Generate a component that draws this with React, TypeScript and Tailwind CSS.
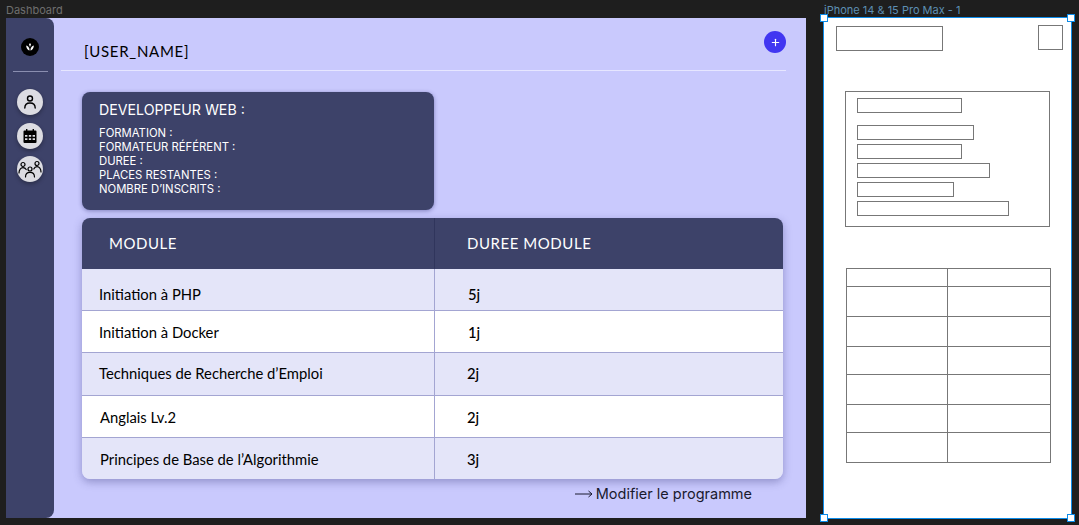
import { Plus } from "lucide-react";

const modules = [
  { name: "Initiation à PHP", days: "5j", nameClass: "pl-[17px]", dayClass: "pl-[33px]", pad: "pt-[9px]", bg: "bg-[#e4e5f9]", h: "h-[42px]" },
  { name: "Initiation à Docker", days: "1j", nameClass: "pl-[17px]", dayClass: "pl-[33px]", pad: "pt-[1px]", bg: "bg-white", h: "h-[42px]" },
  { name: "Techniques de Recherche d’Emploi", days: "2j", nameClass: "pl-[17px]", dayClass: "pl-[32px]", pad: "pb-[2px]", bg: "bg-[#e4e5f9]", h: "h-[43px]" },
  { name: "Anglais Lv.2", days: "2j", nameClass: "pl-[18px]", dayClass: "pl-[32px]", pad: "pt-[2px]", bg: "bg-white", h: "h-[42px]" },
  { name: "Principes de Base de l’Algorithmie", days: "3j", nameClass: "pl-[18px]", dayClass: "pl-[32px]", pad: "pt-[1px]", bg: "bg-[#e4e5f9]", h: "h-[41px]" },
];

const infoLines = ["FORMATION :", "FORMATEUR RÉFÉRENT :", "DUREE :", "PLACES RESTANTES :", "NOMBRE D’INSCRITS :"];

const phoneBars = [
  { w: "w-[105px]", mt: "mt-[6px]" },
  { w: "w-[117px]", mt: "mt-[12px]" },
  { w: "w-[105px]", mt: "mt-1" },
  { w: "w-[133px]", mt: "mt-1" },
  { w: "w-[97px]", mt: "mt-1" },
  { w: "w-[152px]", mt: "mt-1" },
];

const phoneRows = ["h-[18px]", "h-[30px]", "h-[30px]", "h-[28px]", "h-[30px]", "h-[28px]", "h-[30px]"];

function SideButton({ children }: { children: React.ReactNode }) {
  return (
    <div className="flex h-[26px] w-[26px] items-center justify-center rounded-full bg-[#dcdce2] text-black shadow-[0_2px_4px_rgba(0,0,0,0.3)]">
      {children}
    </div>
  );
}

function Handle({ className }: { className: string }) {
  return <div className={`absolute h-[8px] w-[8px] border-[1.5px] border-[#0d8ce9] bg-white ${className}`} />;
}

function Sidebar() {
  return (
    <aside className="flex w-[48px] shrink-0 flex-col items-center rounded-tr-lg rounded-br-lg bg-[#3d4269]">
      <div className="mt-5 flex h-[18px] w-[18px] items-center justify-center rounded-full bg-black">
        <svg width="10" height="10" viewBox="0 0 10 10" fill="#fff">
          <path d="M5 1 6 2.6 5 5 4 2.6Z" />
          <path d="M1.2 3.6C3 4 4.4 5.2 4.6 8.6 2.4 8.2 1.2 6.2 1.2 3.6Z" />
          <path d="M8.8 3.6C7 4 5.6 5.2 5.4 8.6 7.6 8.2 8.8 6.2 8.8 3.6Z" />
        </svg>
      </div>
      <div className="mt-[15px] h-px w-[35px] bg-[#8a8eb0]" />
      <div className="mt-[17px] flex flex-col gap-[7.5px]">
        <SideButton>
          <svg width="16" height="16" viewBox="0 0 16 16" fill="none" stroke="currentColor" strokeWidth="1.4" strokeLinecap="round">
            <circle cx="8" cy="4.500" r="2.500" />
            <path d="M2.800 14c0-3.400 2.400-5 5.200-5s5.200 1.600 5.200 5" />
          </svg>
        </SideButton>
        <SideButton>
          <svg width="16" height="16" viewBox="0 0 16 16" fill="currentColor">
            <path d="M4 1h1.400v2H4zM10.600 1H12v2h-1.400z" />
            <path
              fillRule="evenodd"
              d="M2.500 2.400h11a1 1 0 0 1 1 1V14a1 1 0 0 1-1 1h-11a1 1 0 0 1-1-1V3.400a1 1 0 0 1 1-1ZM3 7v1.800h2.400V7Zm3.800 0v1.800h2.400V7Zm3.800 0v1.800H13V7ZM3 10.200V12h2.400v-1.800Zm3.800 0V12h2.400v-1.800Zm3.800 0V12H13v-1.800Z"
            />
          </svg>
        </SideButton>
        <SideButton>
          <svg width="24" height="18" viewBox="0 0 24 18" fill="none" stroke="currentColor" strokeWidth="1.2" strokeLinecap="round">
            <circle cx="5" cy="4.500" r="2" />
            <circle cx="19" cy="3.500" r="2" />
            <circle cx="12" cy="9" r="2" />
            <path d="M1 13c0-3.200 1.800-5.400 4-5.400 1.400 0 2.500.7 3.200 1.900" />
            <path d="M23 12c0-3.200-1.800-5.400-4-5.400-1.400 0-2.500.7-3.200 2.400" />
            <path d="M7.500 17c0-2.800 2-4.600 4.500-4.600s4.500 1.800 4.500 4.600" />
          </svg>
        </SideButton>
      </div>
    </aside>
  );
}

function ModulesTable() {
  return (
    <div className="ml-[21px] mt-2 w-[701px] overflow-hidden rounded-lg shadow-[0_3px_8px_rgba(40,40,110,0.35)] font-['Lato',sans-serif] text-black">
      <div className="flex h-[51px] bg-[#3d4269] text-[15px] tracking-[0.55px] text-white">
        <div className="flex w-[353px] items-center border-r border-[#30355c] pl-[27px]">MODULE</div>
        <div className="flex items-center pl-[32px]">DUREE MODULE</div>
      </div>
      {modules.map((row, i) => (
        <div key={i} className={`flex border-b border-[#a3a5d2] text-[14.800px] last:border-b-0 ${row.bg} ${row.h}`}>
          <div className={`flex w-[353px] items-center border-r border-[#a3a5d2] ${row.nameClass} ${row.pad}`}>{row.name}</div>
          <div className={`flex items-center font-medium ${row.dayClass} ${row.pad}`}>{row.days}</div>
        </div>
      ))}
    </div>
  );
}

function Dashboard() {
  return (
    <div className="flex h-[500px] w-[800px] bg-[#c9c9fd]">
      <Sidebar />
      <main className="flex-1 pl-[7px]">
        <header className="mr-5 flex h-[53px] items-start justify-between border-b border-[#e6e6ff] pl-[23px]">
          <span className="mt-[24px] font-['Lato',sans-serif] text-[15px] leading-[18px] tracking-[0.7px] text-black">[USER_NAME]</span>
          <button className="mt-[13px] flex h-[22px] w-[22px] items-center justify-center rounded-full bg-[#4136f1] text-white">
            <Plus size={11} strokeWidth={2.5} />
          </button>
        </header>
        <section className="ml-[21px] mt-[21px] h-[118px] w-[352px] rounded-lg bg-[#3d4269] pl-[17px] pt-[8px] font-['Inter',sans-serif] text-white shadow-[0_1px_4px_rgba(40,40,110,0.45)]">
          <h2 className="text-[14.200px] leading-[20px]">DEVELOPPEUR WEB :</h2>
          <div className="mt-[6px] text-[11.300px] leading-[14px]">
            {infoLines.map((line) => (
              <p key={line}>{line}</p>
            ))}
          </div>
        </section>
        <ModulesTable />
        <div className="mr-[54px] mt-[6px] flex items-center justify-end gap-[3px] font-['Inter',sans-serif] text-[14.500px] leading-[18px] text-[#1a1a2e]">
          <svg width="18" height="8" viewBox="0 0 18 8" fill="none" stroke="currentColor" strokeWidth="1">
            <path d="M0 4h17M13.500 1 17 4l-3.500 3" />
          </svg>
          <span>Modifier le programme</span>
        </div>
      </main>
    </div>
  );
}

function PhoneWireframe() {
  return (
    <div className="relative -mt-px h-[502px] w-[249px] border border-[#0d8ce9] bg-white">
      <Handle className="-left-[4px] -top-[4px]" />
      <Handle className="-right-[4px] -top-[4px]" />
      <Handle className="-bottom-[4px] -left-[4px]" />
      <Handle className="-bottom-[4px] -right-[4px]" />
      <div className="flex items-start justify-between pl-[12px] pr-[8px] pt-[7px]">
        <div className="mt-px h-[25px] w-[107px] border border-[#777]" />
        <div className="h-[25px] w-[25px] border border-[#777]" />
      </div>
      <div className="ml-[21px] mt-[40px] h-[136px] w-[205px] border border-[#777] pl-[11px]">
        {phoneBars.map((bar, i) => (
          <div key={i} className={`h-[15px] border border-[#777] ${bar.w} ${bar.mt}`} />
        ))}
      </div>
      <div className="ml-[22px] mt-[41px] w-[205px] border-l border-t border-[#777]">
        {phoneRows.map((h, i) => (
          <div key={i} className={`grid grid-cols-[101px_103px] ${h}`}>
            <div className="border-b border-r border-[#777]" />
            <div className="border-b border-r border-[#777]" />
          </div>
        ))}
      </div>
    </div>
  );
}

export default function App() {
  return (
    <div className="h-[525px] w-[1079px] overflow-hidden bg-[#1e1e1e] font-['Inter',sans-serif]">
      <div className="flex h-[18px] items-center pt-[3px] text-[11px]">
        <span className="ml-[6px] w-[818px] text-[#6e6e6e]">Dashboard</span>
        <span className="text-[#5d8fb3]">iPhone 14 &amp; 15 Pro Max - 1</span>
      </div>
      <div className="flex items-start">
        <div className="ml-[6px]">
          <Dashboard />
        </div>
        <div className="ml-[17px]">
          <PhoneWireframe />
        </div>
      </div>
    </div>
  );
}
